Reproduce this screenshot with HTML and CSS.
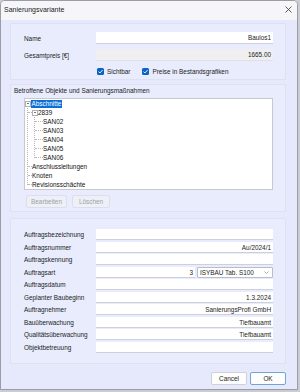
FILE: index.html
```html
<!DOCTYPE html>
<html lang="de">
<head>
<meta charset="utf-8">
<title>Sanierungsvariante</title>
<link rel="stylesheet" href="styles.css">
</head>
<body>
<div class="window">
  <div class="titlebar">
    <span class="title">Sanierungsvariante</span>
    <svg class="close" width="7" height="7" viewBox="0 0 7 7"><path d="M0.5 0.5 L6.5 6.5 M6.5 0.5 L0.5 6.5" stroke="#333" stroke-width="0.8" fill="none"/></svg>
  </div>
  <div class="body">
    <div class="group g1">
      <div class="frow"><span class="lbl">Name</span><div class="inp">Baulos1</div></div>
      <div class="frow mt5"><span class="lbl">Gesamtpreis [€]</span><div class="inp dis">1665.00</div></div>
      <div class="checks">
        <span class="cb"><svg width="7" height="7" viewBox="0 0 7 7"><path d="M1.5 3.6 L2.9 5 L5.6 2" stroke="#fff" stroke-width="0.9" fill="none"/></svg></span><span class="cbl">Sichtbar</span>
        <span class="cb cb2"><svg width="7" height="7" viewBox="0 0 7 7"><path d="M1.5 3.6 L2.9 5 L5.6 2" stroke="#fff" stroke-width="0.9" fill="none"/></svg></span><span class="cbl">Preise in Bestandsgrafiken</span>
      </div>
    </div>
    <div class="group g2">
      <div class="glabel">Betroffene Objekte und Sanierungsmaßnahmen</div>
      <div class="tree">
        <div class="row"><i class="tog"></i><span class="sel">Abschnitte</span></div>
        <div class="kids k0">
          <div class="row"><i class="conn c4"></i><i class="tog"></i><span>2839</span></div>
          <div class="kids k1">
            <div class="row"><i class="conn c8"></i><span>SAN02</span></div>
            <div class="row"><i class="conn c8"></i><span>SAN03</span></div>
            <div class="row"><i class="conn c8"></i><span>SAN04</span></div>
            <div class="row"><i class="conn c8"></i><span>SAN05</span></div>
            <div class="row"><i class="conn c8"></i><span>SAN06</span></div>
          </div>
          <div class="row"><i class="conn c4"></i><span>Anschlussleitungen</span></div>
          <div class="row"><i class="conn c4"></i><span>Knoten</span></div>
          <div class="row"><i class="conn c4"></i><span>Revisionsschächte</span></div>
        </div>
      </div>
      <div class="tbtns">
        <span class="btn disabled b-edit">Bearbeiten</span>
        <span class="btn disabled b-del">Löschen</span>
      </div>
    </div>
    <div class="group g3">
      <div class="frow r"><span class="lbl">Auftragsbezeichnung</span><div class="inp"></div></div>
      <div class="frow r"><span class="lbl">Auftragsnummer</span><div class="inp">Au/2024/1</div></div>
      <div class="frow r"><span class="lbl">Auftragskennung</span><div class="inp"></div></div>
      <div class="frow r"><span class="lbl">Auftragsart</span><div class="inp num">3</div><div class="select"><span>ISYBAU Tab. S100</span><svg width="5" height="3" viewBox="0 0 5 3"><path d="M0.5 0.5 L2.5 2.5 L4.5 0.5" stroke="#777" stroke-width="0.6" fill="none"/></svg></div></div>
      <div class="frow r"><span class="lbl">Auftragsdatum</span><div class="inp"></div></div>
      <div class="frow r"><span class="lbl">Geplanter Baubeginn</span><div class="inp">1.3.2024</div></div>
      <div class="frow r"><span class="lbl">Auftragnehmer</span><div class="inp">SanierungsProfi GmbH</div></div>
      <div class="frow r"><span class="lbl">Bauüberwachung</span><div class="inp">Tiefbauamt</div></div>
      <div class="frow r"><span class="lbl">Qualitätsüberwachung</span><div class="inp">Tiefbauamt</div></div>
      <div class="frow r"><span class="lbl">Objektbetreuung</span><div class="inp"></div></div>
    </div>
    <div class="footer">
      <span class="btn fbtn">Cancel</span>
      <span class="btn fbtn ok">OK</span>
    </div>
  </div>
</div>
</body>
</html>
```

FILE: styles.css
```css
* { box-sizing: border-box; }
html, body { margin: 0; padding: 0; }
body {
  background: #c9ccd3;
  font-family: "Liberation Sans", Arial, sans-serif;
  font-size: 6.4px;
  color: #1c1c1c;
  width: 300px;
  height: 392px;
  overflow: hidden;
}
.window {
  width: 298px;
  height: 390px;
  border: 1px solid #9c9ca4;
  border-radius: 5px 5px 0 0;
  background: #e5e9fb;
  overflow: hidden;
}
.titlebar {
  height: 19px;
  background: #f6f6f9;
  display: flex;
  align-items: center;
  justify-content: space-between;
  padding: 0 5px 2px 3px;
}
.title { font-size: 7px; color: #222; }
.close { display: block; margin-top: -1px; }
.body { padding: 3px 0 0 9px; }
.group {
  width: 276px;
  background: #e8ecfc;
  border: 1px solid #dde1f2;
  padding: 0 12px 0 13px;
}
.g1 { height: 57px; padding-top: 8px; }
.g2 { margin-top: 4px; height: 128px; padding: 2px 12px 0 2px; }
.g3 { margin-top: 6px; height: 146px; padding-top: 10px; }
.frow { display: flex; align-items: center; height: 12px; }
.frow.r { height: 11px; margin-bottom: 1.5px; }
.mt5 { margin-top: 5px; }
.lbl { width: 72px; flex: none; white-space: nowrap; }
.inp {
  flex: 1;
  height: 100%;
  background: #fff;
  border-bottom: 1px solid #cdd0da;
  text-align: right;
  padding-right: 2px;
  line-height: 11px;
  white-space: nowrap;
}
.inp.dis { background: #efeff1; border-bottom-color: #e0e0e4; }
.inp.num { flex: none; width: 99px; }
.select {
  flex: none;
  width: 76px;
  height: 100%;
  margin-left: 2px;
  background: #fff;
  border: 1px solid #b9bccb;
  border-radius: 1px;
  display: flex;
  align-items: center;
  justify-content: space-between;
  padding: 0 3px 0 2px;
}
.select svg { display: block; }
.checks { display: flex; align-items: center; height: 10px; margin-top: 5px; padding-left: 73px; }
.cb {
  width: 7px; height: 7px;
  background: #0a62c4;
  border-radius: 1.5px;
  flex: none;
}
.cb svg { display: block; }
.cbl { margin-left: 3px; }
.cb2 { margin-left: 12px; }
.glabel { height: 8px; line-height: 8px; padding-left: 1px; margin-top: 0; white-space: nowrap; }
.tree {
  margin: 3px 0 0 11px;
  height: 92px;
  background: #fff;
  border: 1px solid #c8c9cf;
  padding-top: 0;
  color: #111;
}
.row { display: flex; align-items: center; height: 9px; line-height: 9px; white-space: nowrap; }
.tog {
  width: 6px; height: 6px;
  border: 1px solid #b0b0b0;
  background: linear-gradient(#555, #555) center / 2px 0.8px no-repeat #fff;
  flex: none;
}
.sel { background: #0a6fd6; color: #fff; padding: 0 1px 0 0.5px; line-height: 8px; }
.kids { border-left: 1px dotted #b8b8b8; }
.k0 { margin-left: 2px; }
.k1 { margin-left: 6px; height: 45px; }
.kids > .row:last-child { position: relative; }
.kids > .row:last-child::after {
  content: "";
  position: absolute;
  left: -1px; top: 5px;
  width: 1px; height: 4px;
  background: #fff;
}
.conn { flex: none; height: 0; border-top: 1px dotted #b8b8b8; }
.c4 { width: 4px; }
.c8 { width: 8px; }
.tbtns { display: flex; margin: 5px 0 0 13px; gap: 5px; }
.btn {
  display: flex; align-items: center; justify-content: center;
  height: 13px;
  border: 1px solid #d6d8e0;
  background: #fbfbfc;
  border-radius: 2px;
}
.disabled { color: #a0a0a6; background: #eef0f8; border-color: #dcdfea; }
.b-edit { width: 41px; }
.b-del { width: 38px; }
.footer { display: flex; justify-content: flex-end; gap: 3px; margin: 8px 11px 0 0; }
.fbtn { width: 36px; background: #fdfdfd; border-color: #cfd1d8; }
.ok { border-color: #6ea5dc; }
```
